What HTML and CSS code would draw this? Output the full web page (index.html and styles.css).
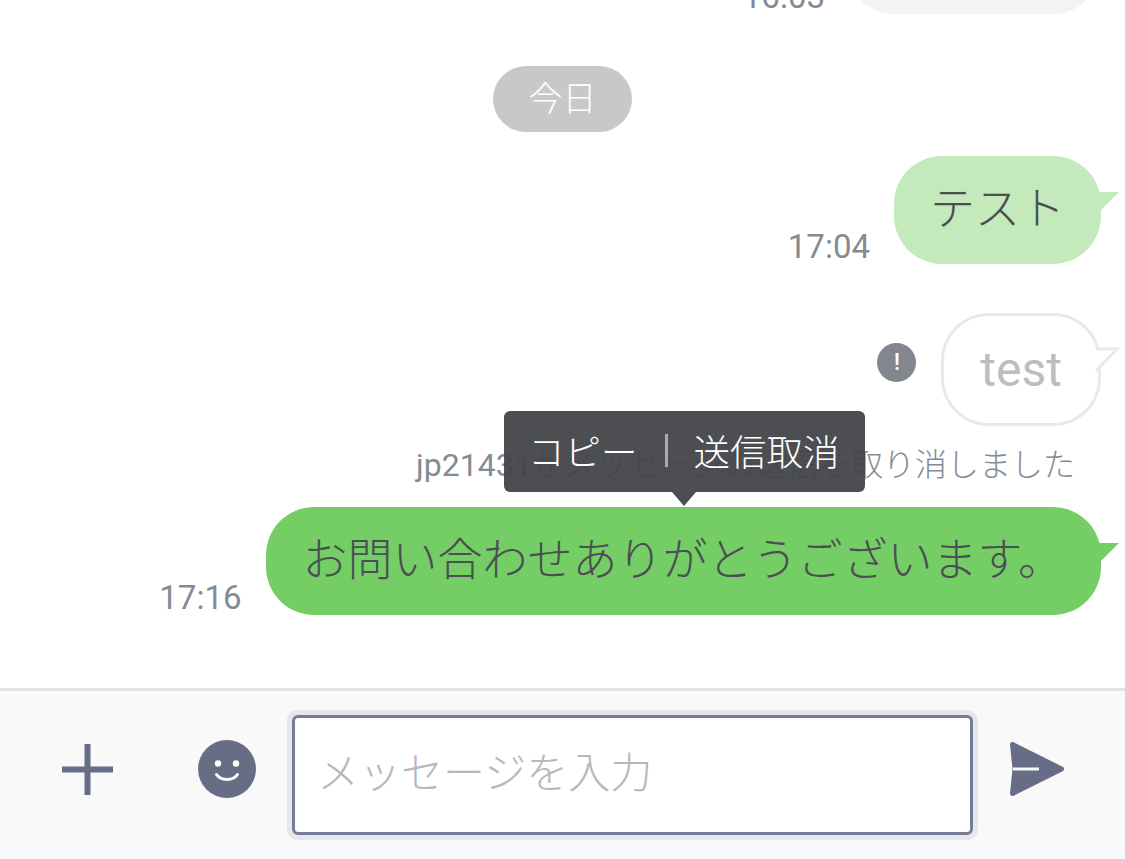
FILE: index.html
```html
<!DOCTYPE html>
<html lang="ja">
<head>
    <meta charset="UTF-8">
    <title>トーク</title>
    <link rel="stylesheet" href="styles.css">
</head>
<body>
    <div class="chat">
        <div class="row row-first">
            <span class="time">16:03</span>
            <div class="bubble bubble-gray"></div>
        </div>
        <div class="date-pill">今日</div>
        <div class="row row-test">
            <span class="time">17:04</span>
            <div class="bubble bubble-light">テスト</div>
        </div>
        <div class="row row-failed">
            <span class="alert">!</span>
            <div class="bubble bubble-failed">
                test
                <svg class="failed-tail" width="28" height="28" viewBox="0 0 28 28">
                    <path d="M2 2H23L2 24" fill="#fff" stroke="#e9e9e9" stroke-width="3"/>
                </svg>
            </div>
        </div>
        <div class="system-msg"><span class="user-id">jp21431</span>がメッセージの送信を取り消しました</div>
        <div class="row row-last">
            <span class="time">17:16</span>
            <div class="bubble bubble-green">お問い合わせありがとうございます。</div>
        </div>
        <div class="tooltip">
            <span>コピー</span>
            <span class="tooltip-sep"></span>
            <span>送信取消</span>
        </div>
    </div>
    <div class="footer">
        <svg class="icon icon-plus" width="51" height="51" viewBox="0 0 51 51">
            <path d="M0 25.5H51M25.5 0V51" stroke="#666d85" stroke-width="6" fill="none"/>
        </svg>
        <svg class="icon icon-smile" width="58" height="58" viewBox="0 0 58 58">
            <circle cx="29" cy="29" r="29" fill="#666d85"/>
            <circle cx="20" cy="23.5" r="3.2" fill="#fff"/>
            <circle cx="38" cy="23.5" r="3.2" fill="#fff"/>
            <path d="M18.5 34.5C23 41 35 41 39.5 34.5" stroke="#fff" stroke-width="3" fill="none" stroke-linecap="round"/>
        </svg>
        <div class="input">メッセージを入力</div>
        <svg class="icon icon-send" width="56" height="56" viewBox="0 0 56 56">
            <path d="M3.5 3.5L52.5 28L3.5 52.5L6 28Z" fill="#666d85" stroke="#666d85" stroke-width="5" stroke-linejoin="round"/>
            <path d="M4 28H30" stroke="#f9f9fa" stroke-width="3"/>
        </svg>
    </div>
</body>
</html>
```

FILE: styles.css
```css
:root {
    --green: #75ce65;
    --green-light: #c3e9bc;
    --time-color: #858b93;
    --icon-color: #666d85;
}

body {
    margin: 0;
    background: #fff;
    font-family: Roboto, "Noto Sans CJK JP", sans-serif;
    font-weight: 300;
    color: #4a4f52;
    overflow: hidden;
}

.chat {
    position: relative;
    height: 688px;
    padding: 0 24px;
    box-sizing: border-box;
    overflow: hidden;
    display: flex;
    flex-direction: column;
}

.row {
    display: flex;
    justify-content: flex-end;
    align-items: flex-end;
    flex-shrink: 0;
    gap: 24px;
}

.row-first {
    margin-top: -94px;
    gap: 21px;
}

.row-test {
    margin-top: 24px;
}

.row-failed {
    margin-top: 49px;
    gap: 25px;
}

.row-last {
    margin-top: 22px;
    gap: 25px;
}

.time {
    font-size: 33px;
    font-weight: 400;
    line-height: 34px;
    color: var(--time-color);
}

.bubble {
    position: relative;
    padding: 27px 38px 27px 36px;
    font-size: 45px;
    line-height: 54px;
    border-radius: 48px;
    white-space: nowrap;
}

.bubble-gray {
    width: 181px;
    height: 54px;
    background: #f1f3f5;
}

.bubble-light {
    padding: 27px 36px;
    background: var(--green-light);
}

.bubble-green {
    background: var(--green);
}

.bubble-light::after,
.bubble-green::after {
    content: "";
    position: absolute;
    top: 36px;
    right: -18px;
    width: 20px;
    height: 18px;
    clip-path: polygon(0 0, 100% 0, 10% 100%, 0 100%);
}

.bubble-light::after {
    background: var(--green-light);
}

.bubble-green::after {
    background: var(--green);
}

.bubble-failed {
    padding: 25px 36px 25px;
    font-size: 48px;
    font-weight: 400;
    line-height: 57px;
    background: #fff;
    border: 3px solid #e9e9e9;
    color: #bbbdbf;
}

.failed-tail {
    position: absolute;
    top: 31px;
    right: -24px;
}

.alert {
    width: 39px;
    height: 39px;
    margin-bottom: 44px;
    border-radius: 50%;
    background: #81868f;
    color: #fff;
    font-size: 24px;
    font-weight: 500;
    line-height: 39px;
    text-align: center;
}

.date-pill {
    align-self: center;
    flex-shrink: 0;
    margin-top: 52px;
    padding: 0 35.5px;
    height: 66px;
    line-height: 66px;
    border-radius: 33px;
    background: #c8c8c8;
    color: #fff;
    font-size: 34px;
    white-space: nowrap;
}

.system-msg {
    flex-shrink: 0;
    margin-top: 19px;
    padding-right: 26px;
    text-align: right;
    font-size: 32px;
    line-height: 40px;
    color: var(--time-color);
    white-space: nowrap;
}

.user-id {
    font-weight: 400;
}

.tooltip {
    position: absolute;
    left: 504px;
    top: 411px;
    height: 78px;
    padding: 0 25px 3px 24px;
    display: flex;
    align-items: center;
    gap: 25px;
    background: rgba(66, 68, 73, 0.95);
    border-radius: 6px;
    color: #fff;
    font-size: 36.5px;
    white-space: nowrap;
}

.tooltip::after {
    content: "";
    position: absolute;
    left: 168px;
    bottom: -14px;
    border-top: 14px solid #4b4d52;
    border-left: 12px solid transparent;
    border-right: 12px solid transparent;
}

.tooltip-sep {
    width: 3px;
    height: 33px;
    margin: 0 1px 0 2px;
    background: #a9abae;
}

.footer {
    height: 168px;
    border-top: 3px solid #e2e2ea;
    background: #f9f9fa;
    padding-left: 62px;
    display: flex;
    align-items: center;
}

.icon {
    flex-shrink: 0;
    margin-bottom: 12px;
}

.icon-smile {
    margin-left: 85px;
}

.icon-send {
    margin-left: 36px;
}

.input {
    width: 681px;
    height: 120px;
    margin-left: 36px;
    box-sizing: border-box;
    padding-left: 22px;
    border: 3px solid #767b96;
    border-radius: 6px;
    box-shadow: 0 0 0 5px #e6e7ee;
    background: #fff;
    color: #b5b8bd;
    font-size: 42px;
    line-height: 112px;
    white-space: nowrap;
}
```
